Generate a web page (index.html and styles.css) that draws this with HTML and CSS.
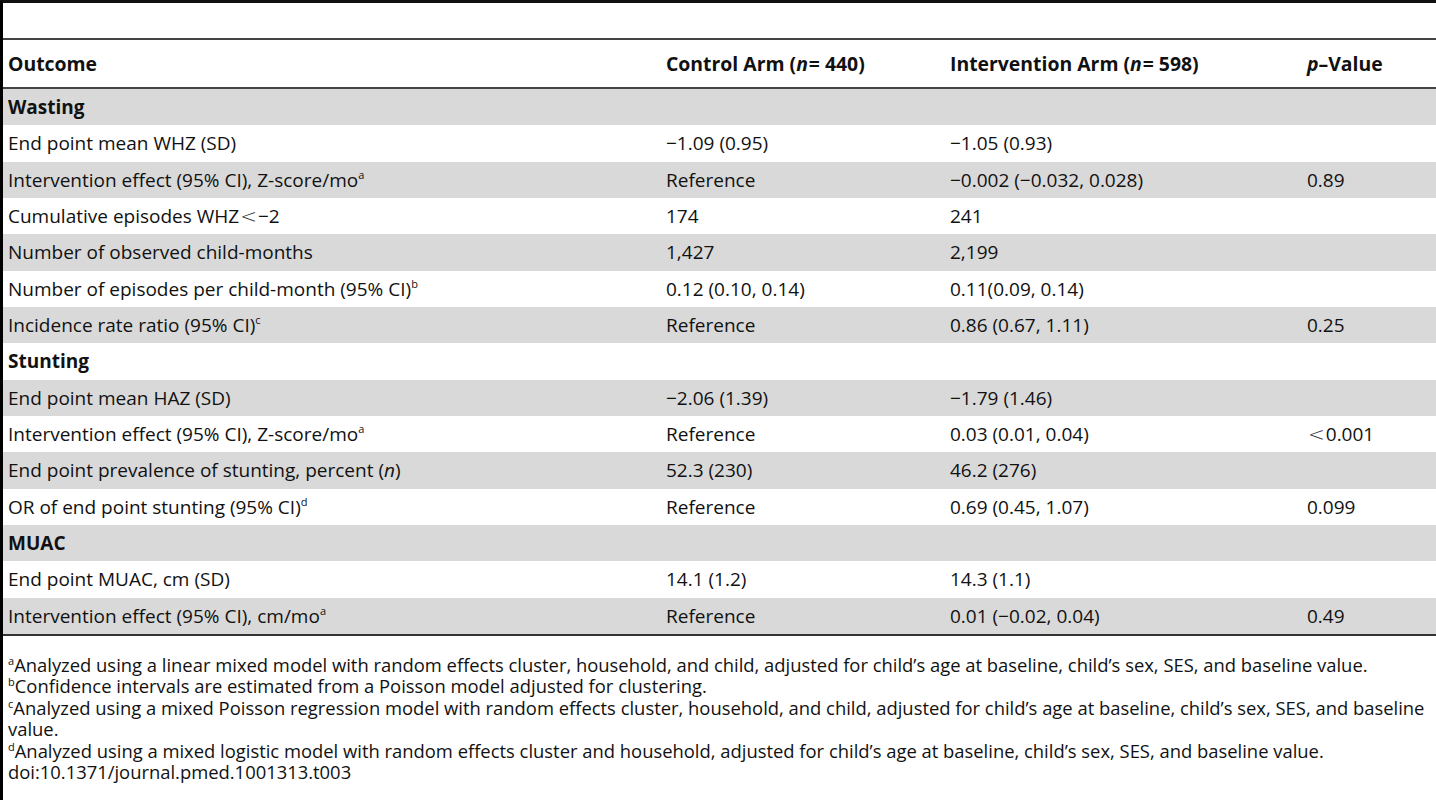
FILE: index.html
```html
<!DOCTYPE html>
<html lang="en">
<head>
<meta charset="utf-8">
<title>Table 3</title>
<link rel="stylesheet" href="styles.css">
</head>
<body>
<div class="sheet">
  <div class="caption"></div>
  <table class="data">
    <colgroup>
      <col class="c1"><col class="c2"><col class="c3"><col class="c4">
    </colgroup>
    <thead>
      <tr>
        <th>Outcome</th>
        <th>Control Arm (<i>n</i><span class="eq">=</span>440)</th>
        <th>Intervention Arm (<i>n</i><span class="eq">=</span>598)</th>
        <th><i>p</i>–Value</th>
      </tr>
    </thead>
    <tbody>
      <tr class="g"><td class="sec">Wasting</td><td></td><td></td><td></td></tr>
      <tr><td>End point mean WHZ (SD)</td><td>−1.09 (0.95)</td><td>−1.05 (0.93)</td><td></td></tr>
      <tr class="g"><td>Intervention effect (95% CI), Z-score/mo<sup>a</sup></td><td>Reference</td><td>−0.002 (−0.032, 0.028)</td><td>0.89</td></tr>
      <tr><td>Cumulative episodes WHZ<span class="lt">&lt;</span>−2</td><td>174</td><td>241</td><td></td></tr>
      <tr class="g"><td>Number of observed child-months</td><td>1,427</td><td>2,199</td><td></td></tr>
      <tr><td>Number of episodes per child-month (95% CI)<sup>b</sup></td><td>0.12 (0.10, 0.14)</td><td>0.11(0.09, 0.14)</td><td></td></tr>
      <tr class="g"><td>Incidence rate ratio (95% CI)<sup>c</sup></td><td>Reference</td><td>0.86 (0.67, 1.11)</td><td>0.25</td></tr>
      <tr><td class="sec">Stunting</td><td></td><td></td><td></td></tr>
      <tr class="g"><td>End point mean HAZ (SD)</td><td>−2.06 (1.39)</td><td>−1.79 (1.46)</td><td></td></tr>
      <tr><td>Intervention effect (95% CI), Z-score/mo<sup>a</sup></td><td>Reference</td><td>0.03 (0.01, 0.04)</td><td><span class="lt">&lt;</span>0.001</td></tr>
      <tr class="g"><td>End point prevalence of stunting, percent (<i>n</i>)</td><td>52.3 (230)</td><td>46.2 (276)</td><td></td></tr>
      <tr><td>OR of end point stunting (95% CI)<sup>d</sup></td><td>Reference</td><td>0.69 (0.45, 1.07)</td><td>0.099</td></tr>
      <tr class="g"><td class="sec">MUAC</td><td></td><td></td><td></td></tr>
      <tr><td>End point MUAC, cm (SD)</td><td>14.1 (1.2)</td><td>14.3 (1.1)</td><td></td></tr>
      <tr class="g"><td>Intervention effect (95% CI), cm/mo<sup>a</sup></td><td>Reference</td><td>0.01 (−0.02, 0.04)</td><td>0.49</td></tr>
    </tbody>
  </table>
  <div class="notes">
    <p><sup>a</sup>Analyzed using a linear mixed model with random effects cluster, household, and child, adjusted for child’s age at baseline, child’s sex, SES, and baseline value.</p>
    <p><sup>b</sup>Confidence intervals are estimated from a Poisson model adjusted for clustering.</p>
    <p><sup>c</sup>Analyzed using a mixed Poisson regression model with random effects cluster, household, and child, adjusted for child’s age at baseline, child’s sex, SES, and baseline value.</p>
    <p><sup>d</sup>Analyzed using a mixed logistic model with random effects cluster and household, adjusted for child’s age at baseline, child’s sex, SES, and baseline value.</p>
    <p>doi:10.1371/journal.pmed.1001313.t003</p>
  </div>
</div>
</body>
</html>
```

FILE: styles.css
```css
html, body {
  margin: 0;
  padding: 0;
  background: #fff;
}
body {
  font-family: "Open Sans", "Noto Sans", sans-serif;
  color: #111;
}
.sheet {
  box-sizing: border-box;
  width: 1436px;
  min-height: 800px;
  border-left: 3px solid #000;
  border-top: 3px solid #111;
}
.caption {
  height: 35px;
}
.data {
  width: 1433px;
  border-collapse: collapse;
  table-layout: fixed;
  font-size: 19px;
  border-top: 2px solid #444;
  border-bottom: 2px solid #333;
}
.c1 { width: 658px; }
.c2 { width: 284px; }
.c3 { width: 357px; }
.c4 { width: 134px; }
.data th {
  text-align: left;
  font-weight: 700;
  font-size: 19.4px;
  height: 47px;
  padding: 0 0 0 5px;
  border-bottom: 2px solid #444;
  vertical-align: middle;
  white-space: nowrap;
}
.eq {
  padding: 0 5px 0 1px;
}
.data td {
  height: 36.33px;
  padding: 0 0 0 5px;
  vertical-align: middle;
  white-space: nowrap;
}
.data tr.g td {
  background: #d9d9d9;
}
.data td.sec {
  font-weight: 700;
}
.data sup {
  font-size: 11px;
  line-height: 0;
  vertical-align: 8px;
}
.lt {
  font-family: "DejaVu Sans", sans-serif;
  font-weight: 200;
  font-size: 20px;
  padding: 0 1px;
  color: #333;
}
.notes {
  padding: 18px 0 0 5px;
  font-size: 18.4px;
  line-height: 21.5px;
}
.notes p {
  margin: 0;
}
.notes sup {
  font-size: 11px;
  line-height: 0;
  vertical-align: 7px;
}
```
